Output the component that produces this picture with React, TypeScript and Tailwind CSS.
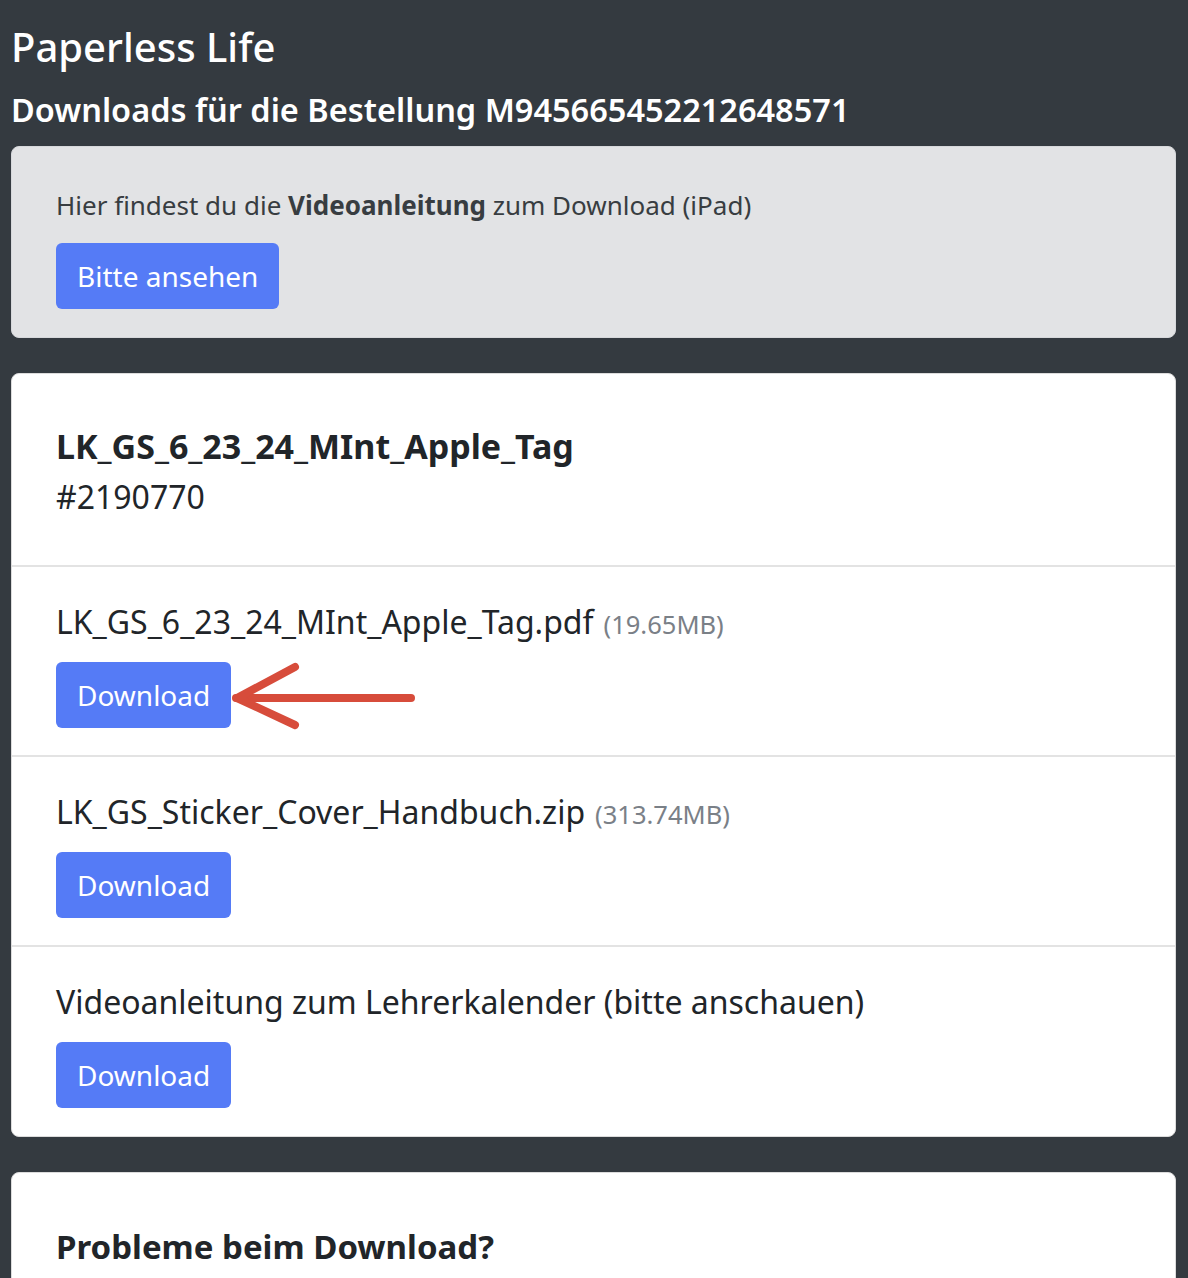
import React from "react";

const font = { fontFamily: "'Noto Sans', 'Open Sans', sans-serif" };

function Btn({ children }: { children: React.ReactNode }) {
  return (
    <button className="h-[66px] px-[21px] rounded-[6px] bg-[#557bf6] text-white text-[28px] leading-none">
      {children}
    </button>
  );
}

function Item({
  name,
  size,
  arrow,
  last,
}: {
  name: string;
  size?: string;
  arrow?: boolean;
  last?: boolean;
}) {
  return (
    <div className={`px-[44px] pt-[33px] ${last ? "pb-[28px]" : "pb-[27px] border-b-2 border-[#e3e3e3]"}`}>
      <div className="h-[44px] leading-[44px] text-[32px] text-[#212529] whitespace-nowrap">
        {name}
        {size && <span className="text-[25.5px] text-[#7a8087] ml-[10px]">{size}</span>}
      </div>
      <div className="mt-[18px] flex items-center">
        <Btn>Download</Btn>
        {arrow && (
          <svg width="190" height="66" viewBox="0 0 190 66" className="overflow-visible">
            <g stroke="#d74c3b" strokeWidth="8" strokeLinecap="round" strokeLinejoin="round" fill="none">
              <path d="M5 36 L180 36" />
              <path d="M64 5 L6 36 L64 63" />
            </g>
          </svg>
        )}
      </div>
    </div>
  );
}

export default function App() {
  return (
    <div style={font} className="min-h-screen bg-[#343a40] pl-[11px] pr-[12px] pb-[40px]">
      <h1 className="pt-[22px] h-[74px] text-[40px] leading-[50px] font-medium text-white">Paperless Life</h1>
      <h2 className="h-[72px] leading-[72px] text-[32.5px] font-semibold text-white whitespace-nowrap">
        Downloads für die Bestellung M945665452212648571
      </h2>
      <div className="rounded-[8px] bg-[#e2e3e5] border border-[#d6d8db] px-[44px] pt-[40px] pb-[28px]">
        <p className="text-[26px] leading-[36px] text-[#383d41]">
          Hier findest du die <b className="font-bold">Videoanleitung</b> zum Download (iPad)
        </p>
        <div className="mt-[20px]">
          <Btn>Bitte ansehen</Btn>
        </div>
      </div>

      <div className="mt-[35px] rounded-[8px] bg-white border border-[#dcdcdc] overflow-hidden">
        <div className="px-[44px] pt-[50px] pb-[48px] border-b-2 border-[#e3e3e3]">
          <div className="text-[34px] leading-[44px] font-bold text-[#212529]">LK_GS_6_23_24_MInt_Apple_Tag</div>
          <div className="mt-[9px] text-[32px] leading-[40px] text-[#212529]">#2190770</div>
        </div>
        <Item name="LK_GS_6_23_24_MInt_Apple_Tag.pdf" size="(19.65MB)" arrow />
        <Item name="LK_GS_Sticker_Cover_Handbuch.zip" size="(313.74MB)" />
        <Item name="Videoanleitung zum Lehrerkalender (bitte anschauen)" last />
      </div>

      <div className="mt-[35px] rounded-[8px] bg-white border border-[#dcdcdc] px-[44px] pt-[52px] pb-[60px]">
        <h3 className="text-[33px] leading-[44px] font-bold text-[#212529]">Probleme beim Download?</h3>
      </div>
    </div>
  );
}
